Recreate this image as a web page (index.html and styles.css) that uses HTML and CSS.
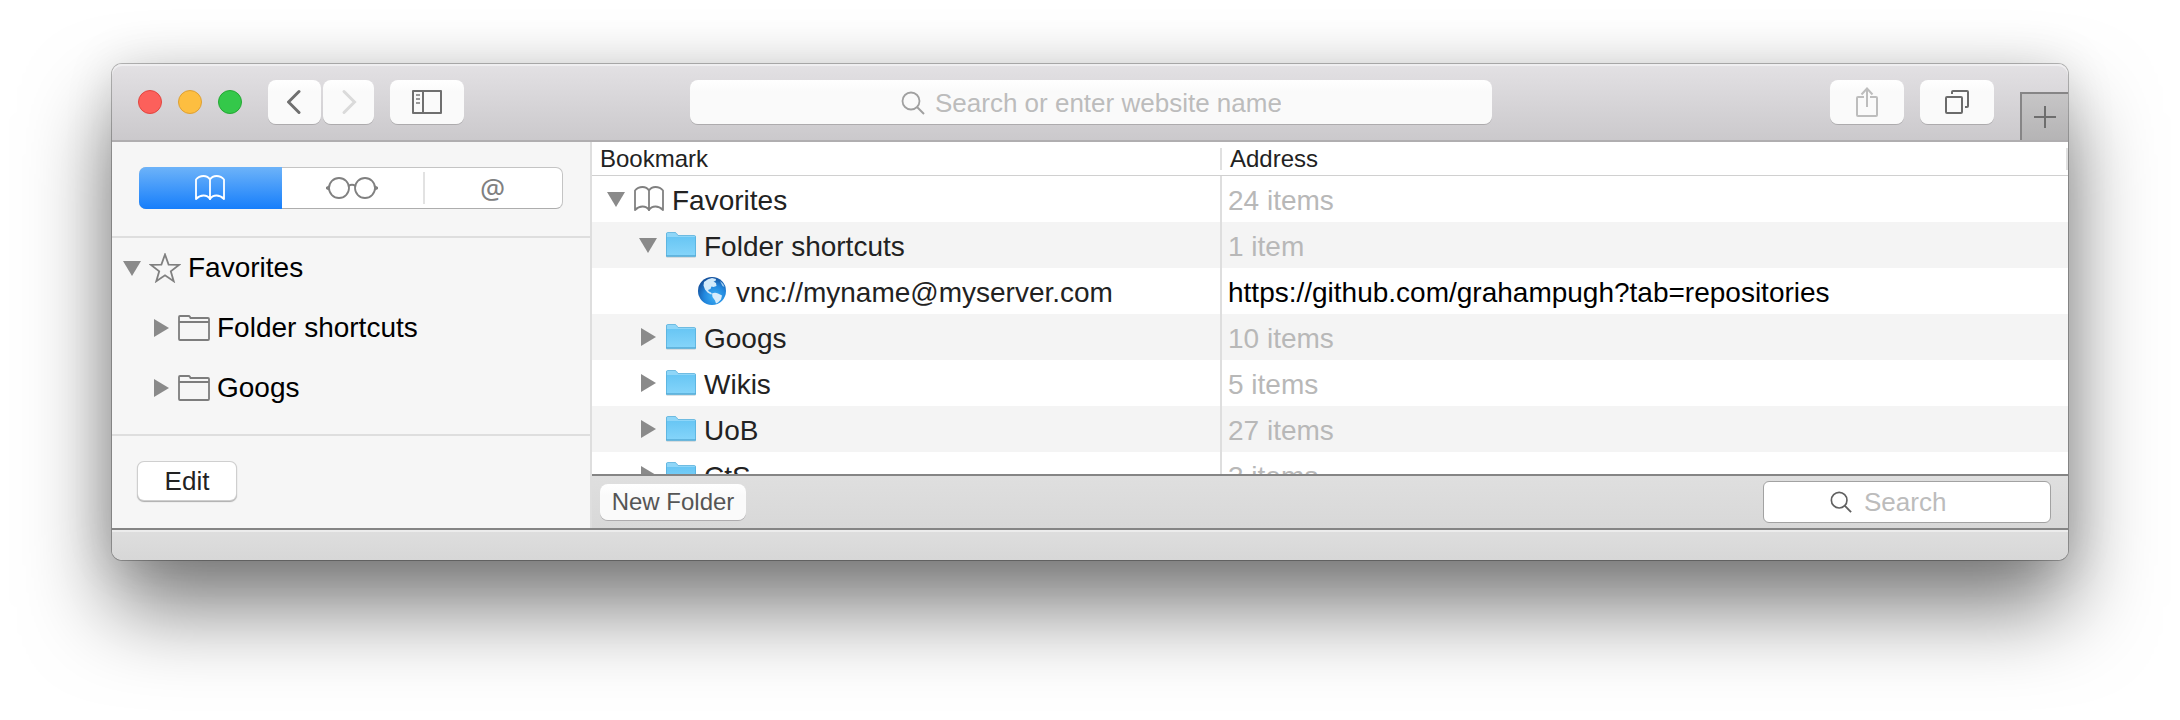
FILE: index.html
```html
<!DOCTYPE html>
<html lang="en">
<head>
<meta charset="utf-8">
<title>Bookmarks</title>
<link rel="stylesheet" href="styles.css">
</head>
<body>
<svg class="defs" aria-hidden="true">
  <defs>
    <linearGradient id="folder-fill" x1="0" y1="0" x2="0" y2="1">
      <stop offset="0" stop-color="#68c6f4"/>
      <stop offset="1" stop-color="#86d5fa"/>
    </linearGradient>
    <radialGradient id="globe-fill" cx="0.6" cy="0.7" r="0.7">
      <stop offset="0" stop-color="#3fb2f6"/>
      <stop offset="0.55" stop-color="#2287dd"/>
      <stop offset="1" stop-color="#14509c"/>
    </radialGradient>
    <symbol id="down" viewBox="0 0 20 20"><path d="M1 3h18l-9 15z" fill="#8a8a8a"/></symbol>
    <symbol id="right" viewBox="0 0 20 20"><path d="M3 1v18l15-9z" fill="#8a8a8a"/></symbol>
    <symbol id="book" viewBox="0 0 30 26">
      <path d="M1 24V4.500C3 2 6 1 8.500 1S13.500 2 15 4.500C16.500 2 19 1 21.500 1S27 2 29 4.500V24C26.500 21.500 24 20.500 21.500 20.500S16.500 21.500 15 24C13.500 21.500 11 20.500 8.500 20.500S3.500 21.500 1 24zM15 4v21" fill="none" stroke="currentColor" stroke-width="1.800" stroke-linejoin="round"/>
    </symbol>
    <symbol id="folder" viewBox="0 0 30 26">
      <path d="M0.500 24.500h29v1H0.500z" fill="#b9c4ca"/>
      <path d="M0 2q0-1.500 1.500-1.500H9q1 0 1.600 1L12 3.500H28.500Q30 3.500 30 5v19H0z" fill="#8fd6f8"/>
      <path d="M0 6q0-1 1-1h28q1 0 1 1v18.500H0z" fill="url(#folder-fill)"/>
      <path d="M0.500 24V2q0-1.500 1-1.500H9q1 0 1.600 1L12 3.500H28.500Q29.500 3.500 29.500 5v19z" fill="none" stroke="#58b0dc" stroke-width="0.800"/>
      <path d="M0 24h30" stroke="#4fa5d0" stroke-width="1"/>
    </symbol>
    <symbol id="folder-line" viewBox="0 0 32 26">
      <path d="M1 24V2q0-1 1-1h8.500q1 0 1.500 1l0.500 1H30q1 0 1 1v20q0 1-1 1H2q-1 0-1-1zM1 7h30" fill="none" stroke="#7d7d7d" stroke-width="1.800"/>
    </symbol>
    <symbol id="globe" viewBox="0 0 28 28">
      <circle cx="14" cy="14" r="14" fill="url(#globe-fill)"/>
      <path d="M6 5q4-3.500 8-4l4 1-0.500 2-2 0.500 2.500 1.500 0.500 3-3 1-2-0.500-1 2.500-2.500 1 1 1.500 2 1 1 1.500-1 0.500-3.500-2-2.500-3-1.500-4z" fill="#d3eafa"/>
      <path d="M14 16.500q3-1.500 6 0l4 2-1 4-3 3-2 1-1-3-2.500-3.500z" fill="#d9edfb"/>
      <path d="M22 4q3 2 4.500 6l-2-1z" fill="#a8d2f2"/>
    </symbol>
    <symbol id="magnifier" viewBox="0 0 24 24">
      <circle cx="10" cy="10" r="8.500" fill="none" stroke="currentColor" stroke-width="1.800"/>
      <path d="M16 16l7 7" stroke="currentColor" stroke-width="2"/>
    </symbol>
  </defs>
</svg>

<main class="window">
  <header class="toolbar">
    <div class="lights">
      <button class="light close" aria-label="Close"></button>
      <button class="light minimise" aria-label="Minimise"></button>
      <button class="light full" aria-label="Full screen"></button>
    </div>
    <div class="history">
      <button class="tool back" aria-label="Back"><svg width="16" height="26" viewBox="0 0 16 26"><path d="M12 2.500L1.500 13l10.500 10.500" fill="none" stroke="#6f6f6f" stroke-width="3" stroke-linecap="round"/></svg></button>
      <button class="tool forward" aria-label="Forward"><svg width="16" height="26" viewBox="0 0 16 26"><path d="M3 2.500L13.500 13L3 23.500" fill="none" stroke="#dadada" stroke-width="3" stroke-linecap="round"/></svg></button>
    </div>
    <button class="tool wide" aria-label="Show sidebar"><svg width="30" height="24" viewBox="0 0 30 24"><path d="M1 1h28v22H1zM11 1v22" fill="none" stroke="#6f6f6f" stroke-width="2" stroke-linejoin="round"/><path d="M4 5h4M4 9h4M4 13h4" stroke="#9a9a9a" stroke-width="1.800"/></svg></button>
    <label class="url">
      <svg class="lens" width="24" height="24"><use href="#magnifier"/></svg>
      <input class="url-input" type="text" aria-label="Website address" placeholder="Search or enter website name">
    </label>
    <div class="actions">
      <button class="tool wide" aria-label="Share"><svg width="22" height="30" viewBox="0 0 22 30"><path d="M8 10H2q-1 0-1 1v17q0 1 1 1h18q1 0 1-1V11q0-1-1-1h-6M11 20V2M5.500 7.500L11 1.500l5.500 6" fill="none" stroke="#bdbdbd" stroke-width="2"/></svg></button>
      <button class="tool wide" aria-label="Show all tabs"><svg width="24" height="24" viewBox="0 0 24 24"><path d="M2 7h14q1 0 1 1v14q0 1-1 1H2q-1 0-1-1V8q0-1 1-1zM7 4V2q0-1 1-1h14q1 0 1 1v14q0 1-1 1h-2" fill="none" stroke="#6b6b6b" stroke-width="2"/></svg></button>
    </div>
    <button class="new-tab" aria-label="New tab"><svg width="22" height="22" viewBox="0 0 22 22"><path d="M11 0v22M0 11h22" stroke="#6e6e6e" stroke-width="2"/></svg></button>
  </header>

  <div class="body">
    <aside class="sidebar">
      <div class="switch">
        <div class="segments">
          <button class="segment active" aria-label="Bookmarks"><svg width="30" height="26"><use href="#book"/></svg></button>
          <button class="segment" aria-label="Reading list"><svg width="52" height="24" viewBox="0 0 52 24"><g fill="none" stroke="#808080" stroke-width="1.800"><circle cx="13" cy="12" r="10"/><circle cx="39" cy="12" r="10"/><path d="M22.500 10q3.500-2.500 7 0"/></g><path d="M0 11l3-1.500v5L0 13zM52 11l-3-1.500v5l3-1.500z" fill="#808080"/></svg></button>
          <button class="segment" aria-label="Shared links">@</button>
        </div>
      </div>
      <ul class="tree">
        <li class="branch"><button class="twist" aria-label="Collapse Favorites"><svg width="20" height="20"><use href="#down"/></svg></button><svg width="32" height="30" viewBox="0 0 32 30"><path d="M16 1.500l3.600 10.100 10.400 0.300-8.200 6.400 2.900 9.900L16 22.300l-8.700 5.900 2.900-9.900-8.200-6.400 10.400-0.300z" fill="none" stroke="#808080" stroke-width="1.800"/></svg><span>Favorites</span></li>
        <li class="branch child"><button class="twist" aria-label="Expand Folder shortcuts"><svg width="20" height="20"><use href="#right"/></svg></button><svg width="32" height="26"><use href="#folder-line"/></svg><span>Folder shortcuts</span></li>
        <li class="branch child"><button class="twist" aria-label="Expand Googs"><svg width="20" height="20"><use href="#right"/></svg></button><svg width="32" height="26"><use href="#folder-line"/></svg><span>Googs</span></li>
      </ul>
      <div class="sidebar-foot"><button class="edit">Edit</button></div>
    </aside>

    <section class="content">
      <div class="list">
        <table class="bookmarks">
          <thead><tr><th class="name-col">Bookmark</th><th class="address-col">Address</th></tr></thead>
          <tbody>
            <tr><td><div class="entry"><button class="twist" aria-label="Collapse Favorites"><svg width="20" height="20"><use href="#down"/></svg></button><svg class="grey" width="30" height="26"><use href="#book"/></svg><span>Favorites</span></div></td><td class="count">24 items</td></tr>
            <tr><td><div class="entry level-1"><button class="twist" aria-label="Collapse Folder shortcuts"><svg width="20" height="20"><use href="#down"/></svg></button><svg width="30" height="26"><use href="#folder"/></svg><span>Folder shortcuts</span></div></td><td class="count">1 item</td></tr>
            <tr><td><div class="entry level-3"><svg class="globe" width="28" height="28"><use href="#globe"/></svg><span>vnc://myname@myserver.com</span></div></td><td class="address">https://github.com/grahampugh?tab=repositories</td></tr>
            <tr><td><div class="entry level-1"><button class="twist" aria-label="Expand Googs"><svg width="20" height="20"><use href="#right"/></svg></button><svg width="30" height="26"><use href="#folder"/></svg><span>Googs</span></div></td><td class="count">10 items</td></tr>
            <tr><td><div class="entry level-1"><button class="twist" aria-label="Expand Wikis"><svg width="20" height="20"><use href="#right"/></svg></button><svg width="30" height="26"><use href="#folder"/></svg><span>Wikis</span></div></td><td class="count">5 items</td></tr>
            <tr><td><div class="entry level-1"><button class="twist" aria-label="Expand UoB"><svg width="20" height="20"><use href="#right"/></svg></button><svg width="30" height="26"><use href="#folder"/></svg><span>UoB</span></div></td><td class="count">27 items</td></tr>
            <tr><td><div class="entry level-1"><button class="twist" aria-label="Expand CtS"><svg width="20" height="20"><use href="#right"/></svg></button><svg width="30" height="26"><use href="#folder"/></svg><span>CtS</span></div></td><td class="count">3 items</td></tr>
          </tbody>
        </table>
      </div>
      <div class="actions-bar">
        <button class="new-folder">New Folder</button>
        <label class="find">
          <svg class="lens" width="22" height="22"><use href="#magnifier"/></svg>
          <input class="find-input" type="text" aria-label="Search bookmarks" placeholder="Search">
        </label>
      </div>
    </section>
  </div>
  <footer class="status"></footer>
</main>
</body>
</html>
```
FILE: styles.css
```css
* {
  box-sizing: border-box;
}

body {
  margin: 0;
  padding: 64px 112px 160px;
  background: #fff;
  color: #222;
  font: 28px/32px "Liberation Sans", Arial, sans-serif;
}

button,
input {
  margin: 0;
  padding: 0;
  border: 0;
  background: none;
  color: inherit;
  font: inherit;
}

svg {
  display: block;
  flex: none;
}

.defs {
  position: absolute;
  width: 0;
  height: 0;
}

.window {
  border-radius: 10px;
  box-shadow:
    0 0 0 1px rgba(0, 0, 0, 0.26),
    0 48px 86px rgba(0, 0, 0, 0.52),
    0 0 50px rgba(0, 0, 0, 0.12);
}

/* Toolbar */

.toolbar {
  display: flex;
  align-items: center;
  height: 78px;
  padding-left: 26px;
  border-bottom: 2px solid #b0aeb0;
  border-radius: 10px 10px 0 0;
  background: linear-gradient(#e3e1e4, #cbc9cc);
  box-shadow: inset 0 2px 0 #efeef0;
}

.lights {
  display: flex;
  gap: 16px;
  margin-right: 26px;
}

.light {
  width: 24px;
  height: 24px;
  border: 1px solid;
  border-radius: 50%;
}

.close {
  border-color: #e2453f;
  background: #fc605b;
}

.minimise {
  border-color: #dea033;
  background: #fdbe40;
}

.full {
  border-color: #24a833;
  background: #34c84a;
}

.history {
  display: flex;
  gap: 2px;
  margin-right: 16px;
}

.tool,
.url,
.new-folder {
  background: linear-gradient(#fff, #fafafa 12px);
  box-shadow: 0 1px 0 #adabad;
}

.tool {
  display: flex;
  align-items: center;
  justify-content: center;
  height: 44px;
  border-radius: 8px;
}

.back {
  width: 53px;
}

.forward {
  width: 51px;
}

.wide {
  width: 74px;
}

.url {
  display: flex;
  flex: 1;
  align-items: center;
  justify-content: center;
  gap: 10px;
  height: 44px;
  margin: 0 338px 0 226px;
  padding-top: 2px;
  border-radius: 8px;
  color: #a0a0a0;
  font-size: 26px;
}

.url-input {
  width: 346px;
  height: 32px;
  color: #222;
}

input::placeholder {
  color: #bcbcbc;
  opacity: 1;
}

.actions {
  display: flex;
  gap: 16px;
  margin-right: 26px;
}

.new-tab {
  display: flex;
  align-items: center;
  align-self: flex-end;
  justify-content: center;
  width: 48px;
  height: 48px;
  border: solid #868586;
  border-width: 2px 0 0 2px;
  background: linear-gradient(#c6c5c6, #b5b4b5);
}

/* Body */

.body {
  display: grid;
  grid-template-columns: 480px 1fr;
}

.sidebar {
  border-right: 2px solid #dedede;
  background: #f6f6f6;
  color: #000;
}

.switch {
  padding: 25px 27px 27px;
  border-bottom: 2px solid #dedede;
}

.segments {
  display: grid;
  grid-template-columns: 142px 141px 1fr;
  height: 42px;
  border: 1px solid #c4c4c4;
  border-bottom-color: #adadad;
  border-radius: 7px;
  background: #fff;
}

.segment {
  display: flex;
  align-items: center;
  justify-content: center;
  padding-right: 2px;
  color: #808080;
  font-family: "Noto Sans", "Liberation Sans", sans-serif;
  font-size: 28px;
}

.segment + .segment + .segment {
  margin: 4px 0;
  border-left: 2px solid #e2e2e2;
}

.active {
  margin: -1px 0 -1px -1px;
  border-radius: 7px 0 0 7px;
  background: linear-gradient(#6db3f9, #167efb);
  color: #fff;
}

.tree {
  margin: 0;
  padding: 0 0 16px 10px;
  border-bottom: 2px solid #dedede;
  list-style: none;
}

.branch {
  display: flex;
  align-items: center;
  gap: 7px;
  height: 60px;
}

.child {
  padding-left: 29px;
}

.twist {
  width: 20px;
  height: 20px;
}

.sidebar-foot {
  padding: 26px 26px 28px;
}

.edit {
  display: block;
  width: 98px;
  height: 38px;
  border-radius: 6px;
  background: #fff;
  box-shadow: 0 0 0 1px #cfcfcf, 0 1px 1px 1px #adadad;
  color: #222;
  font-size: 26px;
}

.content {
  display: flex;
  flex-direction: column;
  min-width: 0;
}

/* The list takes whatever height the sidebar leaves it and scrolls inside */
.list {
  flex: 1;
  contain: size;
  overflow: auto;
  border-bottom: 2px solid #858585;
  background: #fff;
  scrollbar-width: none;
}

.bookmarks {
  width: 100%;
  border-collapse: separate;
  border-spacing: 0;
  table-layout: fixed;
}

th {
  height: 34px;
  padding: 0 8px;
  border-bottom: 1px solid #d0d0d0;
  background: linear-gradient(#e0e0e0, #e0e0e0) right 6px / 2px 22px no-repeat;
  font-size: 24px;
  font-weight: 400;
  line-height: 28px;
  text-align: left;
}

.name-col {
  width: 630px;
}

td {
  height: 46px;
  padding: 4px 6px 0;
}

td:first-child {
  padding: 0 0 0 14px;
  border-right: 2px solid #dedede;
}

tbody tr:nth-child(even) {
  background: #f4f4f4;
}

.entry {
  display: flex;
  align-items: center;
  gap: 8px;
}

.entry span {
  padding-top: 4px;
}

.level-1 {
  padding-left: 32px;
}

.level-3 {
  padding-left: 92px;
}

.level-3 .globe {
  margin-right: 2px;
}

.grey {
  color: #808080;
}

.count {
  color: #b8b8b8;
}

.address {
  color: #000;
}

.actions-bar {
  display: flex;
  align-items: center;
  justify-content: space-between;
  height: 52px;
  padding: 0 17px 0 8px;
  background: linear-gradient(#dfdfdf, #d8d8d8);
}

.new-folder {
  width: 146px;
  height: 36px;
  border-radius: 8px;
  color: #555;
  font-size: 24px;
}

.find {
  display: flex;
  align-items: center;
  gap: 12px;
  width: 288px;
  height: 42px;
  padding-left: 66px;
  border: 1px solid #a2a2a2;
  border-radius: 6px;
  background: #fff;
  color: #606060;
  font-size: 26px;
}

.find-input {
  flex: 1;
  min-width: 0;
  height: 32px;
  color: #222;
}

.status {
  height: 32px;
  border-top: 2px solid #858585;
  border-radius: 0 0 10px 10px;
  background: linear-gradient(#dedede, #d7d7d7);
  box-shadow: inset 0 2px 0 #ececec;
}
```
